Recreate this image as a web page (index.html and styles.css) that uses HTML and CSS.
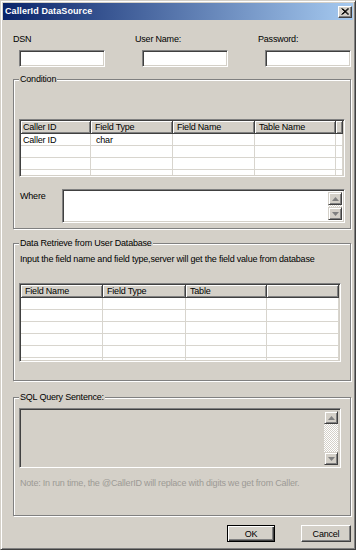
FILE: index.html
```html
<!DOCTYPE html>
<html lang="en">
<head>
    <meta charset="UTF-8">
    <title>CallerId DataSource</title>
    <link rel="stylesheet" href="styles.css">
</head>
<body>
    <div class="window">
        <div class="titlebar">
            <span class="title">CallerId DataSource</span>
            <span class="close">
                <svg width="8" height="7" viewBox="0 0 8 7"><path d="M0.5 0.5 L7 6.5 M1.5 0.5 L8 6.5 M7 0.5 L0.5 6.5 M8 0.5 L1.5 6.5" stroke="#000" stroke-width="1" fill="none"/></svg>
            </span>
        </div>

        <div class="content">
            <div class="conn">
                <div class="field"><label>DSN</label><div class="edit"></div></div>
                <div class="field"><label>User Name:</label><div class="edit"></div></div>
                <div class="field"><label>Password:</label><div class="edit"></div></div>
            </div>

            <!-- Condition -->
            <fieldset class="group group-cond">
                <legend>Condition</legend>
                <div class="list list-cond">
                    <div class="list-head">
                        <div class="hcell">Caller ID</div>
                        <div class="hcell">Field Type</div>
                        <div class="hcell">Field Name</div>
                        <div class="hcell">Table Name</div>
                        <div class="hcell"></div>
                    </div>
                    <div class="list-body">
                        <div class="row"><div class="cell">Caller ID</div><div class="cell">char</div><div class="cell"></div><div class="cell"></div><div class="cell"></div></div>
                        <div class="row"><div class="cell"></div><div class="cell"></div><div class="cell"></div><div class="cell"></div><div class="cell"></div></div>
                        <div class="row"><div class="cell"></div><div class="cell"></div><div class="cell"></div><div class="cell"></div><div class="cell"></div></div>
                        <div class="row"><div class="cell"></div><div class="cell"></div><div class="cell"></div><div class="cell"></div><div class="cell"></div></div>
                    </div>
                </div>
                <div class="where">
                    <span class="where-label">Where</span>
                    <div class="memo memo-where">
                        <div class="memo-text"></div>
                        <div class="scrollbar">
                            <div class="sbtn"><svg width="7" height="4" viewBox="0 0 7 4"><path d="M3.5 0 L7 4 L0 4 Z" fill="#808080"/></svg></div>
                            <div class="track"></div>
                            <div class="sbtn"><svg width="7" height="4" viewBox="0 0 7 4"><path d="M0 0 L7 0 L3.5 4 Z" fill="#808080"/></svg></div>
                        </div>
                    </div>
                </div>
            </fieldset>

            <!-- Data Retrieve -->
            <fieldset class="group group-data">
                <legend>Data Retrieve from User Database</legend>
                <p class="hint">Input the field name and field type,server will get the field value from database</p>
                <div class="list list-data">
                    <div class="list-head">
                        <div class="hcell">Field Name</div>
                        <div class="hcell">Field Type</div>
                        <div class="hcell">Table</div>
                        <div class="hcell"></div>
                    </div>
                    <div class="list-body">
                        <div class="row"><div class="cell"></div><div class="cell"></div><div class="cell"></div><div class="cell"></div></div>
                        <div class="row"><div class="cell"></div><div class="cell"></div><div class="cell"></div><div class="cell"></div></div>
                        <div class="row"><div class="cell"></div><div class="cell"></div><div class="cell"></div><div class="cell"></div></div>
                        <div class="row"><div class="cell"></div><div class="cell"></div><div class="cell"></div><div class="cell"></div></div>
                        <div class="row"><div class="cell"></div><div class="cell"></div><div class="cell"></div><div class="cell"></div></div>
                        <div class="row"><div class="cell"></div><div class="cell"></div><div class="cell"></div><div class="cell"></div></div>
                    </div>
                </div>
            </fieldset>

            <!-- SQL -->
            <fieldset class="group group-sql">
                <legend>SQL Query Sentence:</legend>
                <div class="memo memo-sql">
                    <div class="memo-text"></div>
                    <div class="scrollbar">
                        <div class="sbtn"><svg width="7" height="4" viewBox="0 0 7 4"><path d="M3.5 0 L7 4 L0 4 Z" fill="#808080"/></svg></div>
                        <div class="track"></div>
                        <div class="sbtn"><svg width="7" height="4" viewBox="0 0 7 4"><path d="M0 0 L7 0 L3.5 4 Z" fill="#808080"/></svg></div>
                    </div>
                </div>
                <p class="note">Note: In run time, the @CallerID will replace with digits we get from Caller.</p>
            </fieldset>

            <div class="buttons">
                <button class="btn btn-default">OK</button>
                <button class="btn">Cancel</button>
            </div>
        </div>
    </div>
</body>
</html>
```

FILE: styles.css
```css
/* Janela estilo Windows clássico */
* {
    box-sizing: border-box;
}

body {
    margin: 0;
    background: #fff;
    font-family: "Liberation Sans", Arial, sans-serif;
    font-size: 9px;
    line-height: 11px;
    letter-spacing: -0.2px;
    color: #000;
}

.window {
    width: 356px;
    height: 550px;
    padding: 2px;
    background: #d4d0c8;
    border: 1px solid;
    border-color: #d4d0c8 #404040 #404040 #d4d0c8;
    box-shadow: inset 1px 1px #fff, inset -1px -1px #808080;
    display: flex;
    flex-direction: column;
}

.titlebar {
    height: 17px;
    padding: 0 1px 0 2px;
    display: flex;
    align-items: center;
    background: linear-gradient(to right, #0a246a, #a6caf0);
}

.title {
    color: #fff;
    font-weight: bold;
    letter-spacing: 0.1px;
}

.close {
    margin-left: auto;
    width: 14px;
    height: 12px;
    display: flex;
    align-items: center;
    justify-content: center;
    background: #d4d0c8;
    border: 1px solid;
    border-color: #fff #404040 #404040 #fff;
    box-shadow: inset -1px -1px #808080;
}

.content {
    padding: 0 2px 0 10px;
    display: flex;
    flex-direction: column;
}

/* Conexao */
.conn {
    margin-top: 14px;
    display: grid;
    grid-template-columns: 122px 123px 1fr;
}

.field label {
    display: block;
}

.edit {
    width: 86px;
    height: 17px;
    margin: 5px 0 0 6px;
    background: #fff;
    border: 1px solid;
    border-color: #808080 #fff #fff #808080;
    box-shadow: inset 1px 1px #404040, inset -1px -1px #d4d0c8;
}

.field + .field .edit {
    margin-left: 7px;
}

/* Group boxes */
.group {
    margin: 7px 0 0;
    padding: 0 5px 5px;
    min-width: 0;
    border: 1px solid #808080;
    box-shadow: inset 1px 1px #fff, 1px 1px #fff;
}

.group legend {
    padding: 0 1px;
    background: #d4d0c8;
    line-height: 11px;
}

.group-data {
    margin-top: 9px;
    padding-bottom: 18px;
}

.group-sql {
    margin-top: 11px;
    padding-bottom: 26px;
}

/* ListView */
.list {
    background: #fff;
    border: 1px solid;
    border-color: #808080 #fff #fff #808080;
    box-shadow: inset 1px 1px #404040, inset -1px -1px #d4d0c8;
    padding: 1px;
}

.list-cond {
    margin-top: 34px;
}

.list-data {
    width: 322px;
    margin-top: 18px;
}

.list-head,
.row {
    display: grid;
}

.list-cond .list-head,
.list-cond .row {
    grid-template-columns: 70px 82px 82px 81px 1fr;
}

.list-data .list-head,
.list-data .row {
    grid-template-columns: 82px 83px 81px 1fr;
}

.hcell {
    height: 13px;
    padding: 1px 0 0 4px;
    background: #d4d0c8;
    border-right: 1px solid #404040;
    border-bottom: 1px solid #404040;
    box-shadow: inset 1px 1px #fff, inset -1px -1px #808080;
    white-space: nowrap;
    overflow: hidden;
}

.list-cond .hcell:first-child {
    padding-left: 2px;
}

.list-body {
    overflow: hidden;
}

.list-cond .list-body {
    height: 41px;
}

.list-data .list-body {
    height: 62px;
}

.row {
    height: 12px;
    border-bottom: 1px solid #d8d5ce;
}

.cell {
    padding: 1px 0 0 2px;
    border-right: 1px solid #d8d5ce;
    white-space: nowrap;
}

.list-cond .cell:nth-child(2) {
    padding-left: 5px;
}

/* Memos */
.where {
    margin-top: 12px;
    display: flex;
}

.where-label {
    margin: 2px 0 0 1px;
}

.memo {
    display: flex;
    padding: 2px;
    border: 1px solid;
    border-color: #808080 #fff #fff #808080;
    box-shadow: inset 1px 1px #404040, inset -1px -1px #d4d0c8;
}

.memo-where {
    margin-left: auto;
    width: 283px;
    height: 34px;
    background: #fff;
}

.memo-sql {
    width: 322px;
    height: 60px;
    margin-top: 5px;
    background: #d4d0c8;
}

.memo-text {
    flex: 1;
}

.scrollbar {
    width: 14px;
    display: flex;
    flex-direction: column;
}

.sbtn {
    height: 13px;
    display: flex;
    align-items: center;
    justify-content: center;
    background: #d4d0c8;
    border: 1px solid;
    border-color: #d4d0c8 #404040 #404040 #d4d0c8;
    box-shadow: inset 1px 1px #fff, inset -1px -1px #808080;
}

.track {
    flex: 1;
    background: repeating-conic-gradient(#fff 0 25%, #d4d0c8 0 50%) 0 0 / 2px 2px;
}

p {
    margin: 0;
}

.hint {
    margin-top: 5px;
    padding-left: 1px;
}

.note {
    margin-top: 10px;
    padding-left: 1px;
    color: #9c9a95;
}

/* Botoes */
.buttons {
    margin-top: 9px;
    display: flex;
    justify-content: flex-end;
}

.btn {
    height: 17px;
    width: 50px;
    padding: 0;
    font-family: inherit;
    font-size: 9px;
    letter-spacing: -0.2px;
    color: #000;
    background: #d4d0c8;
    border: 1px solid;
    border-color: #fff #404040 #404040 #fff;
    box-shadow: inset -1px -1px #808080;
}

.btn-default {
    width: 48px;
    margin-right: 26px;
    border-color: #000;
    box-shadow: inset 1px 1px #fff, inset -1px -1px #404040, inset -2px -2px #808080;
}
```
